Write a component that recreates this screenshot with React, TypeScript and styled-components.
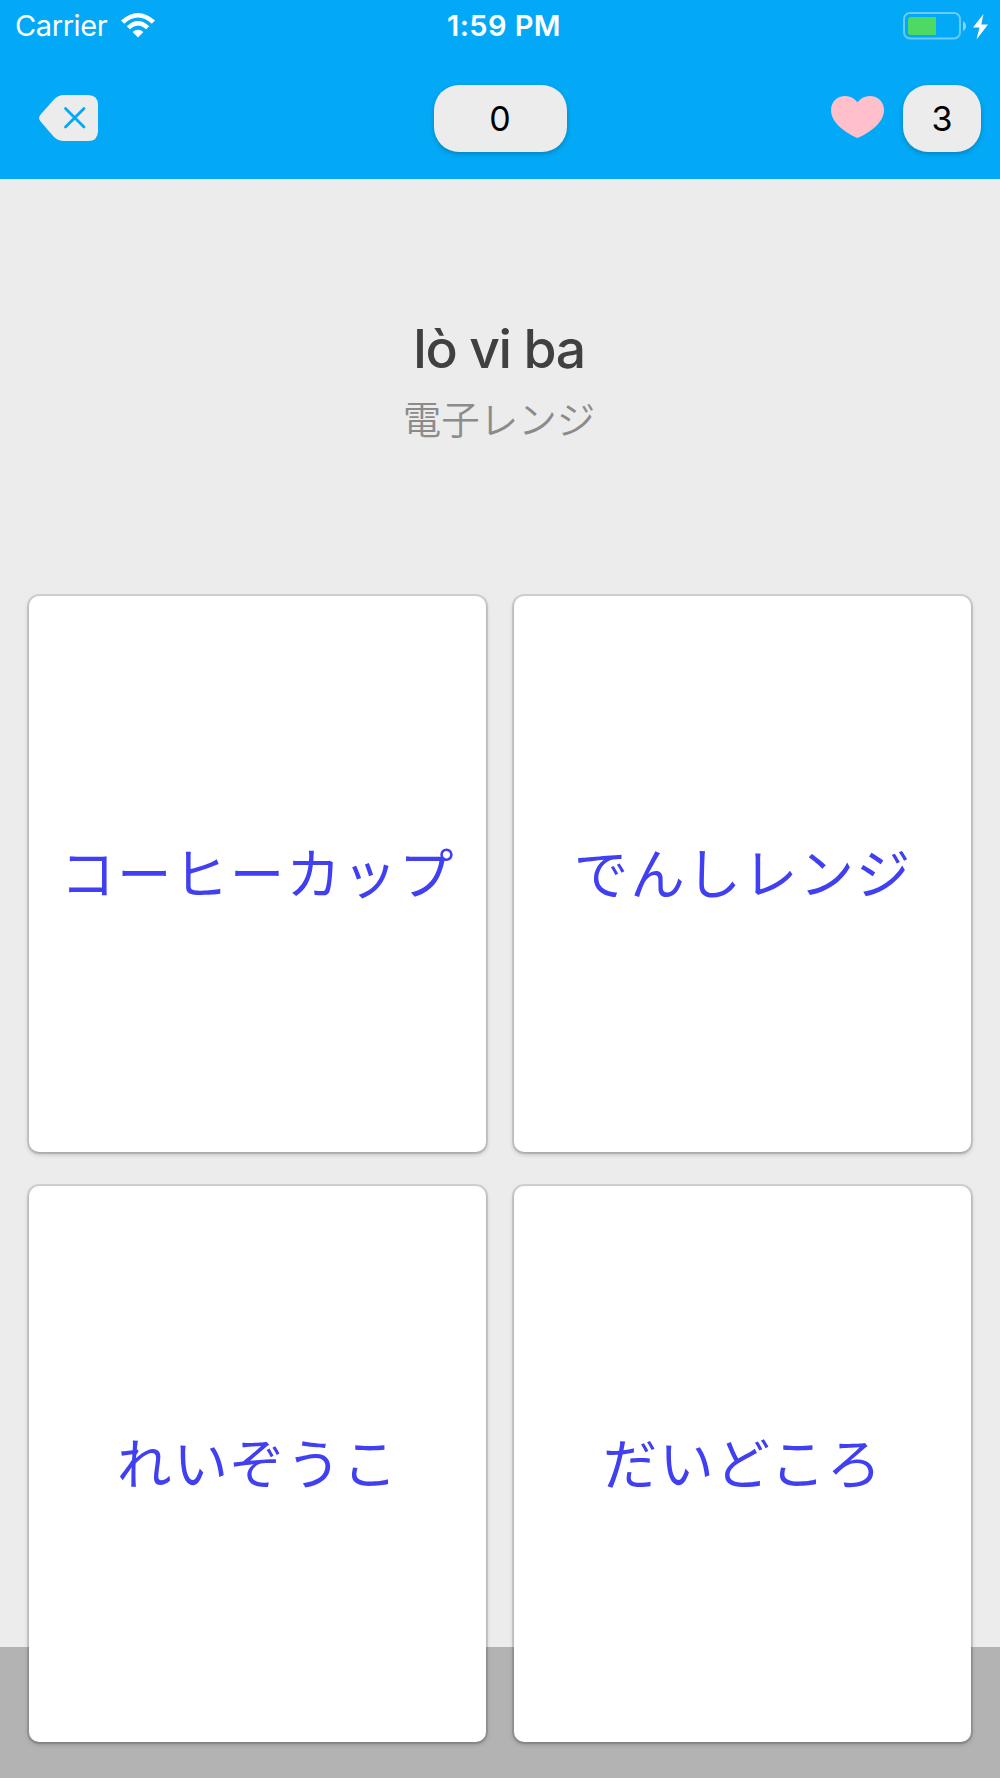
import React from "react";
import styled, { createGlobalStyle } from "styled-components";

const GlobalStyle = createGlobalStyle`
  * { box-sizing: border-box; }
  body { margin: 0; background: #ececec; }
`;

const Screen = styled.div`
  width: 1000px;
  height: 1778px;
  overflow: hidden;
  display: flex;
  flex-direction: column;
  font-family: Inter, "Noto Sans CJK JP", sans-serif;
  background: linear-gradient(to bottom, #ececec 1647px, #b3b3b3 1647px);
`;

const Header = styled.header`
  height: 179px;
  flex: none;
  background: #03a9f6;
`;

const StatusBar = styled.div`
  height: 50px;
  padding: 0 11px 0 15px;
  display: grid;
  grid-template-columns: 1fr auto 1fr;
  align-items: center;
  color: #fff;
`;

const StatusGroup = styled.div<{ $end?: boolean }>`
  display: flex;
  align-items: center;
  justify-content: ${(p) => (p.$end ? "flex-end" : "flex-start")};
`;

const Carrier = styled.span`
  font-size: 29px;
  line-height: 50px;
  letter-spacing: -0.4px;
  margin-right: 14px;
  padding-top: 1px;
`;

const Clock = styled.span`
  font-size: 29px;
  font-weight: 600;
  line-height: 50px;
  letter-spacing: 0.4px;
  margin-left: 4px;
  padding-top: 1px;
`;

const NavBar = styled.div`
  height: 129px;
  padding: 35px 19px 0;
  display: grid;
  grid-template-columns: 1fr auto 1fr;
  align-items: start;
`;

const BackButton = styled.button`
  width: 60px;
  height: 46px;
  margin: 10px 0 0 19px;
  padding: 0;
  border: 0;
  background: none;
  display: block;
`;

const Lives = styled.div`
  display: flex;
  justify-content: flex-end;
  align-items: flex-start;
`;

const HeartIcon = styled.svg`
  margin: 11px 19px 0 0;
`;

const Pill = styled.div<{ $width: number }>`
  width: ${(p) => p.$width}px;
  height: 67px;
  border-radius: 25px;
  background: #ececec;
  box-shadow: 0 2px 5px rgba(0, 0, 0, 0.22);
  color: #000;
  font-size: 34px;
  line-height: 67px;
  text-align: center;
`;

const Prompt = styled.section`
  height: 417px;
  flex: none;
  padding: 138px 2px 0 0;
  display: flex;
  flex-direction: column;
  align-items: center;
`;

const Word = styled.h1`
  margin: 0;
  font-size: 53.5px;
  font-weight: 500;
  line-height: 64px;
  letter-spacing: -1.4px;
  color: #404040;
`;

const Meaning = styled.p`
  margin: 9px 0 0;
  font-family: "Noto Sans CJK JP", sans-serif;
  font-size: 38.5px;
  font-weight: 350;
  line-height: 54px;
  color: #8b8b8b;
`;

const Answers = styled.main`
  padding: 0 29px;
  display: grid;
  grid-template-columns: 457px 457px;
  grid-auto-rows: 556px;
  column-gap: 28px;
  row-gap: 34px;
`;

const Answer = styled.button`
  border: 0;
  padding: 0 0 8px 1px;
  border-radius: 10px;
  background: #fff;
  box-shadow: 0 0 0 2px rgba(0, 0, 0, 0.1), 0 2px 5px rgba(0, 0, 0, 0.26);
  display: flex;
  align-items: center;
  justify-content: center;
  font-family: "Noto Sans CJK JP", sans-serif;
  font-size: 54.5px;
  font-weight: 400;
  letter-spacing: 1.9px;
  color: #4040f2;
  white-space: nowrap;
`;

const choices = ["コーヒーカップ", "でんしレンジ", "れいぞうこ", "だいどころ"];

function WifiIcon() {
  return (
    <svg width="34" height="25" viewBox="0 0 34 25">
      <path d="M0 7.6Q17-7.6 34 7.6L30.8 10.7Q17-1.5 3.2 10.7Z" fill="#fff" />
      <path d="M5.8 13.2Q17 2.8 28.2 13.2L25.1 16.2Q17 9 8.9 16.2Z" fill="#fff" />
      <path d="M11.6 19Q17 14.4 22.4 19L17 24.4Z" fill="#fff" />
    </svg>
  );
}

function BatteryIcon() {
  return (
    <svg width="86" height="28" viewBox="0 0 86 28">
      <rect x="1" y="1" width="56" height="25.5" rx="6" fill="none" stroke="#fff" strokeOpacity=".4" strokeWidth="2" />
      <path d="M7.5 5H33V23H7.5Q5 23 5 20.500V7.500Q5 5 7.500 5Z" fill="#4cd964" />
      <path d="M60 9Q63 10.500 63 14T60 19Z" fill="#fff" fillOpacity=".5" />
      <path d="M80.500 2L70 15.500H76.500L73.500 27.500L85 12.500H78.300Z" fill="#fff" />
    </svg>
  );
}

export default function App() {
  return (
    <>
      <GlobalStyle />
      <Screen>
        <Header>
          <StatusBar>
            <StatusGroup>
              <Carrier>Carrier</Carrier>
              <WifiIcon />
            </StatusGroup>
            <Clock>1:59 PM</Clock>
            <StatusGroup $end>
              <BatteryIcon />
            </StatusGroup>
          </StatusBar>
          <NavBar>
            <BackButton aria-label="Back">
              <svg width="60" height="46" viewBox="0 0 60 46">
                <path
                  d="M26 0H50Q60 0 60 10V36Q60 46 50 46H26Q20 46 15.500 41.500L2.200 26Q0 23 2.200 20L15.500 5Q20 0 26 0Z"
                  fill="#ececec"
                />
                <path d="M27.500 13.500L46 32M46 13.500L27.500 32" stroke="#03a9f6" strokeWidth="2.8" strokeLinecap="round" />
              </svg>
            </BackButton>
            <Pill $width={133}>0</Pill>
            <Lives>
              <HeartIcon width="53" height="42" viewBox="0 0 53 42">
                <path
                  d="M26.500 6.200C30 2 34 0 38.500 0C47 0 53 6 53 14C53 27 38 37 26.500 42C15 37 0 27 0 14C0 6 6 0 14.500 0C19 0 23 2 26.500 6.200Z"
                  fill="#ffc0cb"
                />
              </HeartIcon>
              <Pill $width={78}>3</Pill>
            </Lives>
          </NavBar>
        </Header>
        <Prompt>
          <Word>lò vi ba</Word>
          <Meaning>電子レンジ</Meaning>
        </Prompt>
        <Answers>
          {choices.map((choice) => (
            <Answer key={choice}>{choice}</Answer>
          ))}
        </Answers>
      </Screen>
    </>
  );
}
